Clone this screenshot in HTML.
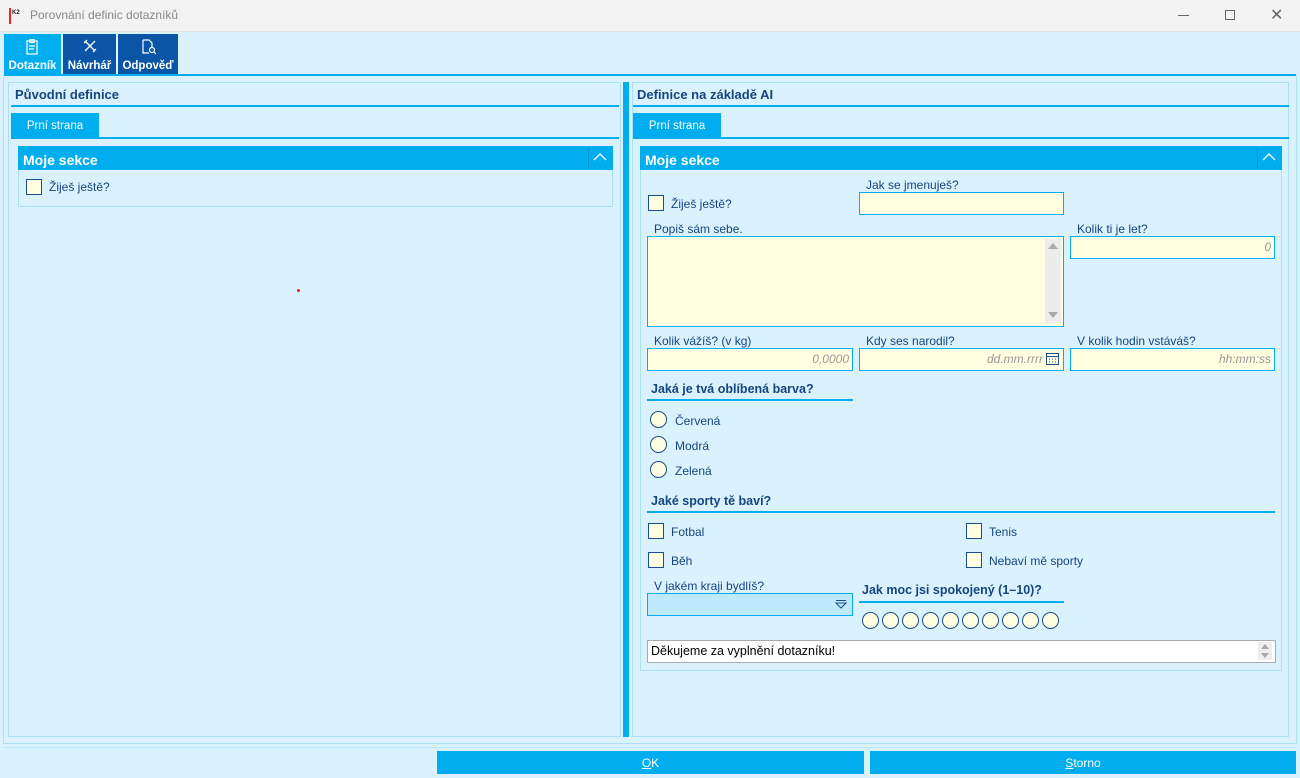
<!DOCTYPE html>
<html><head><meta charset="utf-8"><style>
*{box-sizing:border-box;margin:0;padding:0}
body{width:1300px;height:778px;overflow:hidden;background:#d9f2fd;font-family:"Liberation Sans",sans-serif;position:relative;font-size:12px;color:#17457f}
.a{position:absolute}
.tb{background:#f3f3f3;left:0;top:0;width:1300px;height:32px;border-bottom:1px solid #e5e5e5}
.tab{top:34px;height:40px;color:#fff;font-weight:bold;font-size:11.5px;text-align:center;padding-top:26px}
.line{background:#00adef;height:2px}
.in{background:#fffee0;border:1px solid #00adef}
.lbl{font-size:12px;color:#17457f}
.cb{width:16px;height:16px;border:1px solid #1a4d8f;background:#fffee0}
.rd{width:17px;height:17px;border:1px solid #1a4d8f;border-radius:50%;background:#fffee0}
.ph{color:#999;font-style:italic;text-align:right;padding-right:3px;font-size:12px;line-height:20px}
.bold{font-weight:bold;font-size:13px;color:#17457f}
.hdr{background:#00adef;color:#fff;font-weight:bold;font-size:14px;padding:6px 0 0 5px;height:24px}
</style></head><body>
<div class="a tb"></div>
<div class="a" style="left:9px;top:8px;width:2px;height:16px;background:#e22"></div>
<div class="a" style="left:12px;top:10px;font-size:6px;font-weight:bold;color:#222">K2</div>
<div class="a" style="left:30px;top:8px;font-size:12px;color:#888">Porovnání definic dotazníků</div>
<div class="a" style="left:1178px;top:15px;width:11px;height:1px;background:#666"></div>
<div class="a" style="left:1225px;top:10px;width:10px;height:10px;border:1px solid #666"></div>
<div class="a" style="left:1270px;top:5px;font-size:16px;color:#666">✕</div>

<div class="a tab" style="left:4px;width:57px;background:#00adef">Dotazník</div>
<div class="a tab" style="left:63px;width:53px;background:#0a55a5">Návrhář</div>
<div class="a tab" style="left:118px;width:60px;background:#0a55a5">Odpověď</div>
<svg class="a" style="left:26px;top:39px" width="14" height="16" fill="none" stroke="#fff" stroke-width="1.2"><rect x="1" y="2" width="10" height="13"/><rect x="4" y="0.5" width="4" height="3"/><path d="M3 7h6M3 10h5"/></svg>
<svg class="a" style="left:83px;top:39px" width="14" height="14" fill="none" stroke="#fff" stroke-width="1.3"><path d="M2 2l10 10M12 2L2 12M1 4l3-3M10 13l3-3"/></svg>
<svg class="a" style="left:142px;top:39px" width="14" height="16" fill="none" stroke="#fff" stroke-width="1.2"><path d="M1 1h6l3 3v5M1 1v13h6"/><circle cx="10" cy="11" r="2.5"/><path d="M12 13l2 2"/></svg>
<div class="a line" style="left:4px;top:74px;width:1292px"></div>

<!-- frames -->
<div class="a" style="left:3px;top:76px;width:1294px;height:668px;border:1px solid #a8e1f8;border-top:none"></div>
<div class="a" style="left:8px;top:82px;width:613px;height:655px;border:1px solid #a8e1f8"></div>
<div class="a" style="left:623px;top:82px;width:6px;height:655px;background:#00adef"></div>
<div class="a" style="left:632px;top:82px;width:657px;height:655px;border:1px solid #a8e1f8"></div>
<div class="a" style="left:3px;top:747px;width:1294px;height:1px;background:#b9e8fa"></div>

<!-- left -->
<div class="a bold" style="left:15px;top:87px">Původní definice</div>
<div class="a line" style="left:11px;top:105px;width:608px"></div>
<div class="a" style="left:11px;top:113px;width:88px;height:25px;background:#00adef;color:#fff;font-size:11.5px;text-align:center;padding-top:7px">Prní strana</div>
<div class="a line" style="left:11px;top:137px;width:608px"></div>
<div class="a" style="left:18px;top:146px;width:595px;height:61px;border:1px solid #a8e1f8"></div>
<div class="a hdr" style="left:18px;top:146px;width:595px">Moje sekce</div>
<div class="a" style="left:588px;top:148px;width:1px;height:20px;background:#0795cf"></div>
<svg class="a" style="left:593px;top:152px" width="14" height="10" fill="none" stroke="#fff" stroke-width="1.3"><path d="M1 8l6-6 6 6"/></svg>
<div class="a cb" style="left:26px;top:179px"></div>
<div class="a lbl" style="left:49px;top:180px">Žiješ ještě?</div>
<div class="a" style="left:297px;top:289px;width:3px;height:3px;background:#d22;border-radius:50%"></div>

<!-- right -->
<div class="a bold" style="left:637px;top:87px">Definice na základě AI</div>
<div class="a line" style="left:633px;top:105px;width:656px"></div>
<div class="a" style="left:633px;top:113px;width:88px;height:25px;background:#00adef;color:#fff;font-size:11.5px;text-align:center;padding-top:7px">Prní strana</div>
<div class="a line" style="left:633px;top:137px;width:656px"></div>
<div class="a" style="left:640px;top:146px;width:642px;height:525px;border:1px solid #a8e1f8"></div>
<div class="a hdr" style="left:640px;top:146px;width:642px">Moje sekce</div>
<div class="a" style="left:1257px;top:148px;width:1px;height:20px;background:#0795cf"></div>
<svg class="a" style="left:1262px;top:152px" width="14" height="10" fill="none" stroke="#fff" stroke-width="1.3"><path d="M1 8l6-6 6 6"/></svg>

<div class="a cb" style="left:648px;top:195px"></div>
<div class="a lbl" style="left:671px;top:197px">Žiješ ještě?</div>
<div class="a lbl" style="left:866px;top:178px">Jak se jmenuješ?</div>
<div class="a in" style="left:859px;top:192px;width:205px;height:23px"></div>
<div class="a lbl" style="left:654px;top:222px">Popiš sám sebe.</div>
<div class="a in" style="left:647px;top:236px;width:417px;height:91px"></div>
<div class="a" style="left:1045px;top:239px;width:16px;height:84px;background:#ececec"></div>
<div class="a" style="left:1048px;top:243px;border:5px solid transparent;border-bottom:6px solid #aaa;border-top:none"></div>
<div class="a" style="left:1048px;top:312px;border:5px solid transparent;border-top:6px solid #aaa;border-bottom:none"></div>
<div class="a lbl" style="left:1077px;top:222px">Kolik ti je let?</div>
<div class="a in ph" style="left:1070px;top:236px;width:205px;height:23px">0</div>
<div class="a lbl" style="left:654px;top:334px">Kolik vážíš? (v kg)</div>
<div class="a lbl" style="left:866px;top:334px">Kdy ses narodil?</div>
<div class="a lbl" style="left:1077px;top:334px">V kolik hodin vstáváš?</div>
<div class="a in ph" style="left:647px;top:348px;width:206px;height:23px">0,0000</div>
<div class="a in ph" style="left:859px;top:348px;width:205px;height:23px;padding-right:20px">dd.mm.rrrr</div>
<svg class="a" style="left:1046px;top:352px" width="13" height="13" fill="none" stroke="#1a4d8f"><rect x="0.5" y="1.5" width="12" height="11"/><path d="M0.5 4.5h12M3 7h1M6 7h1M9 7h1M3 10h1M6 10h1M9 10h1"/></svg>
<div class="a in ph" style="left:1070px;top:348px;width:205px;height:23px">hh:mm:ss</div>

<div class="a bold" style="left:651px;top:382px;font-size:12.5px">Jaká je tvá oblíbená barva?</div>
<div class="a line" style="left:647px;top:399px;width:206px"></div>
<div class="a rd" style="left:650px;top:411px"></div><div class="a lbl" style="left:675px;top:414px">Červená</div>
<div class="a rd" style="left:650px;top:436px"></div><div class="a lbl" style="left:675px;top:439px">Modrá</div>
<div class="a rd" style="left:650px;top:461px"></div><div class="a lbl" style="left:675px;top:464px">Zelená</div>

<div class="a bold" style="left:651px;top:494px;font-size:12.5px">Jaké sporty tě baví?</div>
<div class="a line" style="left:647px;top:511px;width:628px"></div>
<div class="a cb" style="left:648px;top:523px"></div><div class="a lbl" style="left:671px;top:525px">Fotbal</div>
<div class="a cb" style="left:966px;top:523px"></div><div class="a lbl" style="left:989px;top:525px">Tenis</div>
<div class="a cb" style="left:648px;top:552px"></div><div class="a lbl" style="left:671px;top:554px">Běh</div>
<div class="a cb" style="left:966px;top:552px"></div><div class="a lbl" style="left:989px;top:554px">Nebaví mě sporty</div>

<div class="a lbl" style="left:654px;top:579px">V jakém kraji bydlíš?</div>
<div class="a" style="left:647px;top:593px;width:206px;height:23px;background:#bde9fb;border:1px solid #00adef"></div>
<svg class="a" style="left:835px;top:599px" width="12" height="11" fill="none" stroke="#1a4d8f"><path d="M1 1.5h10M1 4l5 5 5-5z"/></svg>
<div class="a bold" style="left:862px;top:583px;font-size:12.5px">Jak moc jsi spokojený (1–10)?</div>
<div class="a line" style="left:859px;top:601px;width:205px"></div>
<div class="a rd" style="left:862px;top:612px"></div><div class="a rd" style="left:882px;top:612px"></div><div class="a rd" style="left:902px;top:612px"></div><div class="a rd" style="left:922px;top:612px"></div><div class="a rd" style="left:942px;top:612px"></div><div class="a rd" style="left:962px;top:612px"></div><div class="a rd" style="left:982px;top:612px"></div><div class="a rd" style="left:1002px;top:612px"></div><div class="a rd" style="left:1022px;top:612px"></div><div class="a rd" style="left:1042px;top:612px"></div>

<div class="a" style="left:647px;top:640px;width:629px;height:23px;background:#fff;border:1px solid #aaa;color:#000;padding:3px 0 0 3px;font-size:12.5px">Děkujeme za vyplnění dotazníku!</div>
<div class="a" style="left:1258px;top:642px;width:14px;height:18px;background:#eee"></div>
<div class="a" style="left:1261px;top:644px;border:4px solid transparent;border-bottom:5px solid #aaa;border-top:none"></div>
<div class="a" style="left:1261px;top:653px;border:4px solid transparent;border-top:5px solid #aaa;border-bottom:none"></div>

<div class="a" style="left:437px;top:751px;width:427px;height:23px;background:#00adef;color:#fff;text-align:center;padding-top:5px"><u>O</u>K</div>
<div class="a" style="left:870px;top:751px;width:426px;height:23px;background:#00adef;color:#fff;text-align:center;padding-top:5px"><u>S</u>torno</div>
</body></html>
